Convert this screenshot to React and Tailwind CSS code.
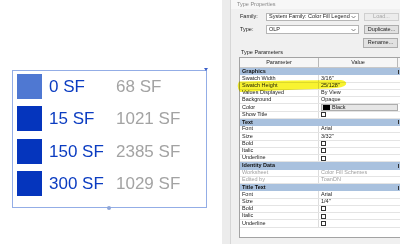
import React from "react";

const legend = [
  { c: "bg-[#4f78d2]", a: "0 SF", b: "68 SF" },
  { c: "bg-[#0535bd]", a: "15 SF", b: "1021 SF" },
  { c: "bg-[#0535bd]", a: "150 SF", b: "2385 SF" },
  { c: "bg-[#0535bd]", a: "300 SF", b: "1029 SF" },
];

const rows = [
  { h: "Graphics" },
  { p: "Swatch Width", v: '3/16"' },
  { p: "Swatch Height", v: '25/128"' },
  { p: "Values Displayed", v: "By View" },
  { p: "Background", v: "Opaque" },
  { p: "Color", color: true },
  { p: "Show Title", cb: true },
  { h: "Text" },
  { p: "Font", v: "Arial" },
  { p: "Size", v: '3/32"' },
  { p: "Bold", cb: true },
  { p: "Italic", cb: true },
  { p: "Underline", cb: true },
  { h: "Identity Data" },
  { p: "Worksheet", v: "Color Fill Schemes", dis: true },
  { p: "Edited by", v: "ToanDN", dis: true },
  { h: "Title Text" },
  { p: "Font", v: "Arial" },
  { p: "Size", v: '1/4"' },
  { p: "Bold", cb: true },
  { p: "Italic", cb: true },
  { p: "Underline", cb: true },
];

function Chevron() {
  return (
    <svg width="5" height="4" viewBox="0 0 5 4" className="shrink-0">
      <path d="M0.5 1 L2.5 3 L4.5 1" stroke="#555" strokeWidth="0.7" fill="none" />
    </svg>
  );
}

function Checkbox() {
  return <div className="w-[5px] h-[5px] border-[0.8px] border-[#333] bg-white" />;
}

export default function App() {
  return (
    <div
      className="w-[400px] h-[244px] flex bg-white overflow-hidden relative"
      style={{ fontFamily: '"Liberation Sans", Arial, sans-serif' }}
    >
      {/* Legend area */}
      <div className="w-[222px] h-full pt-[70px] pl-[12px]">
        <div className="relative w-[195px] h-[138px] border border-[#93ade6] pl-[4px] pt-[3px] flex flex-col gap-[7.25px]">
          {legend.map((r, i) => (
            <div key={i} className="flex items-center h-[25px]">
              <div className={`w-[25px] h-[25px] ${r.c}`} />
              <div className="ml-[7px] w-[67px] text-[17px] leading-none text-[#0b3cc1]">{r.a}</div>
              <div className="text-[17px] leading-none text-[#a3a3a3]">{r.b}</div>
            </div>
          ))}
          <div className="absolute right-[-2px] top-[-3px] w-0 h-0 border-l-[2px] border-r-[2px] border-t-[3px] border-l-transparent border-r-transparent border-t-[#3b5fc9]" />
          <div className="absolute left-[94px] bottom-[-2.5px] w-[4px] h-[4px] rounded-full bg-[#8ea6d8]" />
        </div>
      </div>

      {/* Side strip */}
      <div className="w-[8px] h-full bg-[#ececec]" />

      {/* Dialog */}
      <div className="flex-1 h-full bg-[#f0f0f0] border-l border-[#d6d6d6] flex flex-col text-[5.5px] leading-none text-[#222]">
        <div className="h-[9px] bg-[#f7f7f7] flex items-center pl-[6px] text-[#8a8a8a]">Type Properties</div>
        {/* Family row */}
        <div className="mt-[4px] h-[8px] flex items-center pl-[9px]">
          <div className="w-[26px]">Family:</div>
          <div className="w-[93px] h-full bg-white border-[0.8px] border-[#b5b5b5] flex items-center justify-between px-[2px]">
            <span>System Family: Color Fill Legend</span>
            <Chevron />
          </div>
          <div className="ml-[5px] w-[35px] h-full border-[0.8px] border-[#cfcfcf] bg-[#ececec] flex items-center justify-center text-[#a8a8a8]">
            Load...
          </div>
        </div>
        {/* Type row */}
        <div className="mt-[4px] h-[9px] flex items-center pl-[9px]">
          <div className="w-[26px]">Type:</div>
          <div className="w-[93px] h-full bg-white border-[0.8px] border-[#b5b5b5] flex items-center justify-between px-[2px]">
            <span>OLP</span>
            <Chevron />
          </div>
          <div className="ml-[5px] w-[35px] h-full border-[0.8px] border-[#adadad] bg-[#e1e1e1] flex items-center justify-center">
            Duplicate...
          </div>
        </div>
        {/* Rename row */}
        <div className="mt-[4px] h-[10px] flex justify-end pr-[2px]">
          <div className="w-[35px] h-full border-[0.8px] border-[#adadad] bg-[#e1e1e1] flex items-center justify-center">
            Rename...
          </div>
        </div>
        <div className="h-[9px] flex items-center pl-[10px]">Type Parameters</div>

        {/* Table */}
        <div className="ml-[8px] flex-1 mb-[6px] bg-white border border-[#a3a3a3] border-r-0 flex flex-col relative">
          <div className="h-[10px] flex border-b border-[#c8c8c8] bg-[#f6f6f6]">
            <div className="w-[79px] border-r border-[#b8b8b8] flex items-center justify-center">Parameter</div>
            <div className="flex-1 flex items-center justify-center border-r border-[#b8b8b8] mr-[2px]">Value</div>
          </div>
          {rows.map((r, i) =>
            r.h ? (
              <div key={i} className="h-[7.25px] bg-[#a9c1de] flex items-center justify-between pl-[2px] pr-[1px] font-bold text-[#111]">
                <span>{r.h}</span>
                <span className="w-[1px] h-[4px] bg-[#333]" />
              </div>
            ) : (
              <div key={i} className="h-[7.25px] flex border-b-[0.5px] border-[#e4e4e4]">
                <div className={`w-[79px] border-r-[0.5px] border-[#dcdcdc] flex items-center pl-[2px] ${r.dis ? "text-[#a0a0a0]" : ""}`}>
                  {r.p}
                </div>
                <div className={`flex-1 flex items-center pl-[2px] ${r.dis ? "text-[#a0a0a0]" : ""}`}>
                  {r.cb ? (
                    <Checkbox />
                  ) : r.color ? (
                    <div className="h-full flex-1 mr-[2px] border-[0.6px] border-[#adadad] bg-[#e6e6e6] flex items-center gap-[2px] pl-[1px]">
                      <div className="w-[7px] h-[5px] bg-black" />
                      <span>Black</span>
                    </div>
                  ) : (
                    r.v
                  )}
                </div>
              </div>
            )
          )}
        </div>
      </div>

      {/* Highlighter annotation */}
      <svg className="absolute left-0 top-0 pointer-events-none mix-blend-multiply" width="400" height="244" viewBox="0 0 400 244">
        <path
          d="M239 81.5 Q290 80 341 80 Q347 81 346 84.5 Q344 88 330 88.5 L300 89.5 Q270 90.5 240 92 Q236 87 239 81.5 Z"
          fill="#f7f21a"
          opacity="0.9"
        />
      </svg>
    </div>
  );
}
